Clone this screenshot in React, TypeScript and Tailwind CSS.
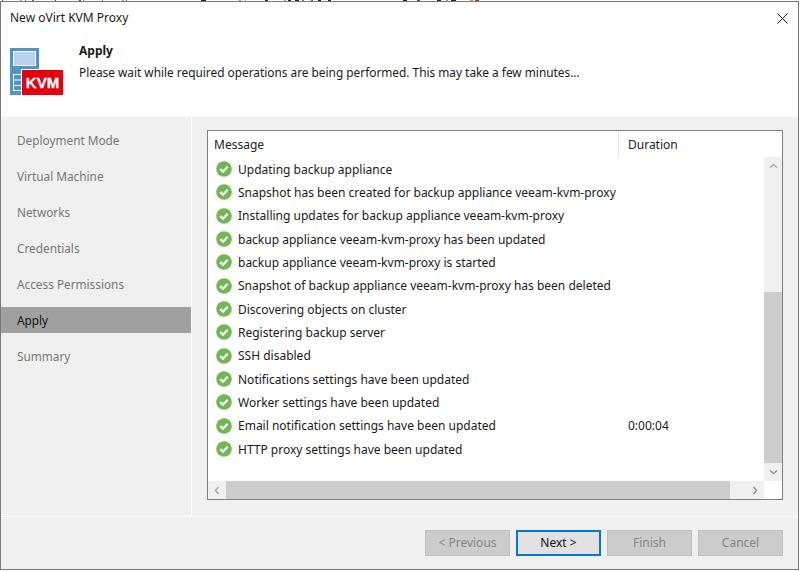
import React from "react";

const steps = [
  "Updating backup appliance",
  "Snapshot has been created for backup appliance veeam-kvm-proxy",
  "Installing updates for backup appliance veeam-kvm-proxy",
  "backup appliance veeam-kvm-proxy has been updated",
  "backup appliance veeam-kvm-proxy is started",
  "Snapshot of backup appliance veeam-kvm-proxy has been deleted",
  "Discovering objects on cluster",
  "Registering backup server",
  "SSH disabled",
  "Notifications settings have been updated",
  "Worker settings have been updated",
  "Email notification settings have been updated",
  "HTTP proxy settings have been updated",
];

const navItems = [
  "Deployment Mode",
  "Virtual Machine",
  "Networks",
  "Credentials",
  "Access Permissions",
  "Apply",
  "Summary",
];

// bottoms of the text of the window behind, cut off by the dialog
const behind = [
  [2, 1, "#555"], [20, 2, "#c9a15a"], [25, 1, "#5a7fb0"], [32, 2, "#b04a4a"], [55, 1, "#444"],
  [79, 2, "#7a3b8f"], [83, 1, "#3f8fc0"], [102, 1, "#666"], [122, 2, "#c9a15a"], [126, 1, "#3f6fb0"],
  [201, 5, "#222"], [239, 2, "#5a9fd0"], [245, 1, "#c9a15a"], [265, 3, "#333"], [284, 2, "#c9a15a"],
  [288, 3, "#223"], [295, 4, "#222"], [302, 2, "#b06a3a"], [311, 2, "#3f6fb0"], [318, 3, "#222"],
  [328, 3, "#322"], [403, 4, "#222"], [417, 3, "#553"], [437, 4, "#224"], [446, 2, "#c9a15a"],
  [451, 5, "#223"], [470, 3, "#c9a15a"], [475, 4, "#a33"],
] as const;

function CheckIcon() {
  return (
    <svg width="16" height="16" viewBox="0 0 16 16" className="shrink-0">
      <circle cx="8" cy="8" r="7.8" fill="#72b655" />
      <path d="M4.3 8.1 7 10.7 11.7 5.7" fill="none" stroke="#fff" strokeWidth="2.3" />
    </svg>
  );
}

function Logo() {
  return (
    <svg width="54" height="48" viewBox="0 0 54 48" className="block">
      <rect x="0" y="0" width="29" height="47" fill="#4f96c6" />
      <rect x="3.5" y="3.5" width="22" height="14" fill="#b9d3ee" stroke="#fff" strokeWidth="1" />
      <rect x="3.5" y="26.5" width="9" height="16" fill="#4f96c6" stroke="#fff" strokeWidth="1" />
      <path d="M3.5 32H12.5M3.5 37.5H12.5" stroke="#fff" strokeWidth="1" />
      <rect x="11.5" y="21.5" width="42" height="26" fill="#e5000f" stroke="#fff" strokeWidth="1" />
      <text
        x="32.5"
        y="40"
        textAnchor="middle"
        fontFamily="Liberation Sans"
        fontWeight="700"
        fontSize="15"
        fill="#fff"
        stroke="#fff"
        strokeWidth="0.3"
      >
        KVM
      </text>
    </svg>
  );
}

function WizardButton({ label, active }: { label: string; active?: boolean }) {
  return (
    <div
      className={
        active
          ? "w-[85px] h-[26px] flex items-center justify-center border-2 border-[#0078d7] bg-[#e1e1e1] text-[#111]"
          : "w-[85px] h-[26px] flex items-center justify-center border border-[#bfbfbf] bg-[#cccccc] text-[#858585]"
      }
    >
      {label}
    </div>
  );
}

export default function App() {
  return (
    <div className="w-[800px] h-[571px] bg-white overflow-hidden text-[12px] text-[#1a1a1a] font-['Noto_Sans',sans-serif]">
      <svg width="800" height="1" className="block">
        {behind.map(([x, w, c]) => (
          <rect key={x} x={x} y="0" width={w} height="1" fill={c} />
        ))}
      </svg>
      <div className="h-[569px] w-[799px] flex flex-col border border-[#7a7a7a]">
        <div className="h-[30px] shrink-0 flex items-center justify-between pl-[9px] pr-[10px] pt-[2px]">
          <span>New oVirt KVM Proxy</span>
          <svg width="11" height="11" viewBox="0 0 11 11">
            <path d="M.5.5l10 10M10.5.5l-10 10" stroke="#222" strokeWidth="1" />
          </svg>
        </div>

        <div className="h-[85px] shrink-0 flex pl-[9px]">
          <div className="w-[69px] pt-[16px]">
            <Logo />
          </div>
          <div className="pt-[10px]">
            <div className="font-bold leading-[18px]">Apply</div>
            <div className="leading-[18px] mt-[3px] text-[11.85px]">
              Please wait while required operations are being performed. This may take a few minutes...
            </div>
          </div>
        </div>

        <div className="flex-1 flex bg-[#f0f0f0] min-h-0">
          <div className="w-[190px] shrink-0 pt-[10px] border-r border-white box-content text-[11.8px]">
            {navItems.map((item) => (
              <div
                key={item}
                className={
                  item === "Apply"
                    ? "h-[26px] mb-[10px] flex items-center pl-[16px] pt-[2px] bg-[#a0a0a0] text-[#111]"
                    : "h-[26px] mb-[10px] flex items-center pl-[16px] pt-[2px] text-[#777]"
                }
              >
                {item}
              </div>
            ))}
          </div>

          <div className="flex-1 min-w-0 flex flex-col">
            <div className="flex-1 min-h-0 pt-[13px] pl-[15px] pr-[15px] pb-[16px]">
              <div className="h-full border border-[#7f7f7f] bg-white flex flex-col">
                <div className="h-[26px] shrink-0 flex text-[#222]">
                  <div className="w-[411px] border-r border-[#e5e5e5] pl-[6px] pt-[1px] flex items-center">Message</div>
                  <div className="pl-[9px] pt-[1px] flex items-center">Duration</div>
                </div>
                <div className="flex-1 min-h-0 flex">
                  <div className="flex-1 min-w-0 overflow-hidden pt-[0.5px]">
                    {steps.map((s) => (
                      <div key={s} className="h-[23.33px] flex items-center pl-[8px] whitespace-nowrap">
                        <CheckIcon />
                        <span className="w-[389px] ml-[6px] shrink-0 pt-[1px]">{s}</span>
                        {s.startsWith("Email") && <span className="ml-[1px] pt-[1px]">0:00:04</span>}
                      </div>
                    ))}
                  </div>
                  <div className="w-[18px] shrink-0 bg-[#f0f0f0] flex flex-col">
                    <div className="h-[17px] flex items-center justify-center">
                      <svg width="9" height="6" viewBox="0 0 9 6">
                        <path d="M1 4.5 4.5 1.5 8 4.5" fill="none" stroke="#a6a6a6" strokeWidth="1.3" />
                      </svg>
                    </div>
                    <div className="h-[118px]" />
                    <div className="flex-1 bg-[#cdcdcd]" />
                    <div className="h-[18px] flex items-center justify-center">
                      <svg width="9" height="6" viewBox="0 0 9 6">
                        <path d="M1 1.5 4.5 4.5 8 1.5" fill="none" stroke="#8c8c8c" strokeWidth="1.3" />
                      </svg>
                    </div>
                  </div>
                </div>
                <div className="h-[18px] shrink-0 flex">
                  <div className="w-[18px] bg-[#f0f0f0] flex items-center justify-center">
                    <svg width="6" height="9" viewBox="0 0 6 9">
                      <path d="M4.5 1 1.5 4.5 4.5 8" fill="none" stroke="#a6a6a6" strokeWidth="1.3" />
                    </svg>
                  </div>
                  <div className="w-[504px] bg-[#cdcdcd]" />
                  <div className="flex-1 bg-[#f0f0f0] flex items-center justify-end pr-[6px]">
                    <svg width="6" height="9" viewBox="0 0 6 9">
                      <path d="M1.5 1 4.5 4.5 1.5 8" fill="none" stroke="#8c8c8c" strokeWidth="1.3" />
                    </svg>
                  </div>
                  <div className="w-[18px] bg-white" />
                </div>
              </div>
            </div>
          </div>
        </div>

        <div className="h-[53px] shrink-0 bg-[#f0f0f0] border-t border-white flex items-start justify-end gap-[6px] pt-[13px] pr-[15px]">
          <WizardButton label="< Previous" />
          <WizardButton label="Next >" active />
          <WizardButton label="Finish" />
          <WizardButton label="Cancel" />
        </div>
      </div>
    </div>
  );
}
